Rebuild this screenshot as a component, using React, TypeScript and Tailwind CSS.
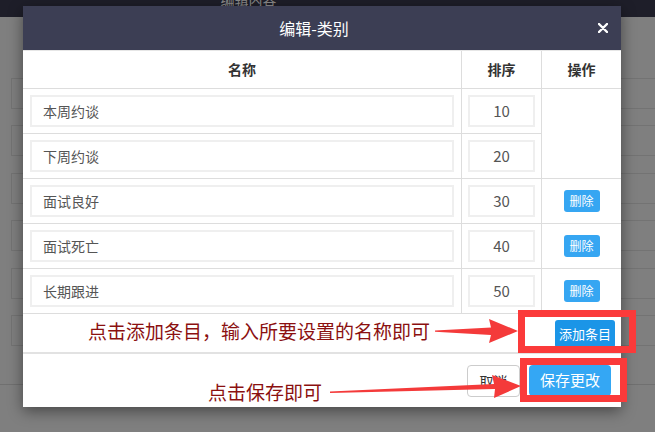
import React from "react";

const rows = [
  { name: "本周约谈", sort: "10", del: false },
  { name: "下周约谈", sort: "20", del: false },
  { name: "面试良好", sort: "30", del: true },
  { name: "面试死亡", sort: "40", del: true },
  { name: "长期跟进", sort: "50", del: true },
];

const font = { fontFamily: '"Noto Sans CJK SC", "Noto Sans", sans-serif' };

export default function App() {
  return (
    <div className="relative w-[655px] h-[432px] overflow-hidden bg-[#7f7f7f]" style={font}>
      {/* background page */}
      <div className="h-[17px] bg-[#1e1e29] flex justify-center overflow-hidden">
        <span className="mt-[-9px] pr-[158px] text-[14px] leading-[16px] text-[#8a8a8a]">编辑内容</span>
      </div>
      <div className="flex flex-col gap-[16.4px] mt-[61px] ml-[11px]">
        {[0, 1, 2, 3, 4, 5].map((i) => (
          <div key={i} className="h-[31px] w-[700px] border border-[#737373]" />
        ))}
      </div>
      <div className="mt-[38px] h-px bg-[#707070]" />

      {/* modal */}
      <div className="absolute left-[23px] top-[6px] w-[598px] bg-white shadow-[0_4px_14px_rgba(0,0,0,0.45)]">
        <div className="relative h-[44px] bg-[#3c3e54] flex items-center justify-center">
          <span className="text-white text-[16px] leading-[20px] pr-[16px]">编辑-类别</span>
          <svg className="absolute right-[13px] top-[17px]" width="10" height="10" viewBox="0 0 10 10">
            <path d="M1 1 L9 9 M9 1 L1 9" stroke="white" strokeWidth="2.4" strokeLinecap="round" />
          </svg>
        </div>
        <div className="grid grid-cols-[438px_80px_80px] border-t border-[#e6e6e6]">
          <div className="h-[38px] border-b border-[#dddddd] flex items-center justify-center text-[14px] font-bold text-[#333]">名称</div>
          <div className="h-[38px] border-b border-l border-[#dddddd] flex items-center justify-center text-[14px] font-bold text-[#333]">排序</div>
          <div className="h-[38px] border-b border-l border-[#dddddd] flex items-center justify-center text-[14px] font-bold text-[#333]">操作</div>
          {rows.map((r, i) => (
            <React.Fragment key={i}>
              <div className="h-[45px] border-b border-[#dddddd] px-[7px] pt-[6px]">
                <div className="h-[32px] border-2 border-[#efefef] flex items-center pl-[11px] text-[14px] text-[#555]">{r.name}</div>
              </div>
              <div className="h-[45px] border-b border-l border-[#dddddd] px-[6px] pt-[6px]">
                <div className="h-[32px] border-2 border-[#efefef] flex items-center justify-center text-[15px] text-[#555]">{r.sort}</div>
              </div>
              {i === 0 && <div className="row-span-2 border-b border-l border-[#dddddd]" />}
              {r.del && (
                <div className="h-[45px] border-b border-l border-[#dddddd] flex items-center justify-center">
                  <span className="w-[36px] h-[22px] rounded-[3px] bg-[#36a6f2] text-white text-[12px] flex items-center justify-center">删除</span>
                </div>
              )}
            </React.Fragment>
          ))}
        </div>
        <div className="h-[40px] border-b-2 border-[#e2e2e2] flex justify-end pr-[6px] pt-[6px]">
          <span className="w-[60px] h-[28px] rounded-[3px] bg-[#1b95e7] text-white text-[13px] flex items-center justify-center">添加条目</span>
        </div>
        <div className="h-[53px] flex justify-end items-start gap-[9px] pr-[10px] pt-[11px]">
          <span className="w-[53px] h-[32px] rounded-[4px] border border-[#cccccc] text-[#333] text-[14px] flex items-center justify-center">取消</span>
          <span className="w-[82px] h-[31px] rounded-[4px] bg-[#34a7f4] text-white text-[15px] flex items-center justify-center">保存更改</span>
        </div>
      </div>

      {/* annotations */}
      <div className="absolute left-[88px] top-[320px] text-[19px] leading-[21px] text-[#8b1010] whitespace-nowrap">点击添加条目，输入所要设置的名称即可</div>
      <div className="absolute left-[208px] top-[381px] text-[19px] leading-[21px] text-[#8b1010] whitespace-nowrap">点击保存即可</div>
      <svg className="absolute left-0 top-0" width="655" height="432" viewBox="0 0 655 432">
        <polygon points="435,330.5 491,327.5 489,319 518,331 489,343 491,335 435,331.8" fill="#f43a3a" />
        <polygon points="330,391.5 494,384 492,375 521,386 494,398 495,389 330,393" fill="#f43a3a" />
      </svg>
      <div className="absolute left-[518px] top-[310px] w-[118px] h-[43px] border-[7px] border-[#fb3a3a]" />
      <div className="absolute left-[520px] top-[358px] w-[107px] h-[44px] border-[7px] border-[#fb3a3a]" />
    </div>
  );
}
